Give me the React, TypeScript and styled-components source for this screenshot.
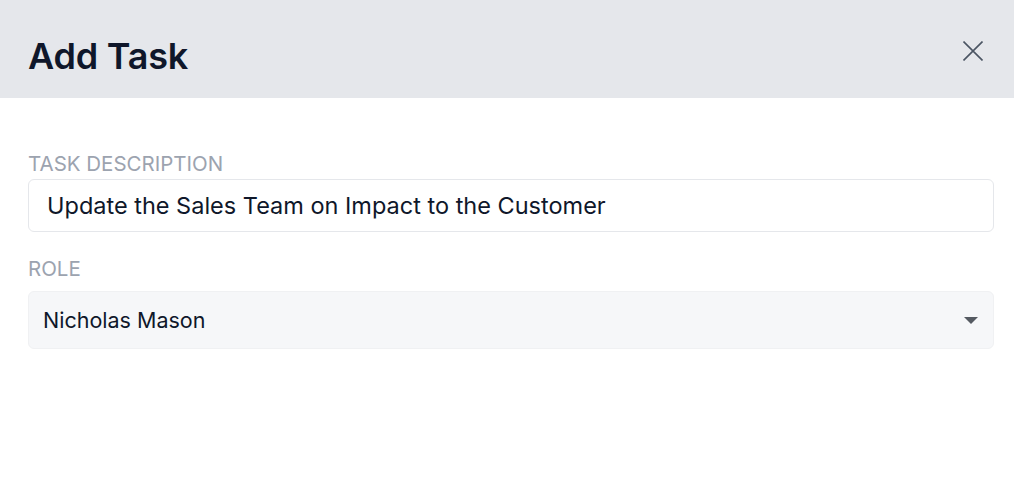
import styled, { createGlobalStyle } from "styled-components";

const GlobalStyle = createGlobalStyle`
  body {
    margin: 0;
    background: #ffffff;
    font-family: Inter, "Noto Sans", sans-serif;
  }
`;

const App = () => {
  return (
    <>
      <GlobalStyle />
      <Modal>
        <HeaderStyle>
          <TitleStyle>Add Task</TitleStyle>
          <CloseButton aria-label="Close">
            <svg width="20" height="20" viewBox="0 0 20 20" fill="none">
              <path d="M0.5 0.5L19.5 19.5M19.5 0.5L0.5 19.5" stroke="#4b5563" strokeWidth="1.6" />
            </svg>
          </CloseButton>
        </HeaderStyle>
        <BodyStyle>
          <Field $gap={3}>
            <LabelStyle>Task Description</LabelStyle>
            <TextInput defaultValue="Update the Sales Team on Impact to the Customer" />
          </Field>
          <Field $gap={10}>
            <LabelStyle>Role</LabelStyle>
            <SelectBox>
              <span>Nicholas Mason</span>
              <Caret />
            </SelectBox>
          </Field>
        </BodyStyle>
      </Modal>
    </>
  );
};

const Modal = styled.div`
  width: 1014px;
  height: 490px;
  background: #ffffff;
`;

const HeaderStyle = styled.header`
  height: 98px;
  background: #e5e7eb;
  display: flex;
  align-items: center;
  justify-content: space-between;
  padding: 0 31px 0 28px;
  box-sizing: border-box;
`;

const TitleStyle = styled.h1`
  margin: 13px 0 0;
  font-size: 36px;
  font-weight: 600;
  color: #0f172a;
  letter-spacing: -0.2px;
`;

const CloseButton = styled.button`
  background: none;
  border: 0;
  padding: 0;
  display: flex;
  cursor: pointer;
  margin-top: 4px;
`;

const BodyStyle = styled.div`
  padding: 54px 20px 0 28px;
  display: flex;
  flex-direction: column;
  gap: 25px;
`;

const Field = styled.div<{ $gap: number }>`
  display: flex;
  flex-direction: column;
  gap: ${({ $gap }) => $gap}px;
`;

const LabelStyle = styled.label`
  font-size: 20.5px;
  font-weight: 400;
  text-transform: uppercase;
  color: #9ca3af;
  line-height: 24px;
`;

const TextInput = styled.input`
  height: 53px;
  box-sizing: border-box;
  border: 1px solid #e5e7eb;
  border-radius: 6px;
  padding: 0 18px;
  font-family: Inter, "Noto Sans", sans-serif;
  font-size: 23.5px;
  color: #0f172a;
  outline: none;
`;

const SelectBox = styled.div`
  height: 58px;
  box-sizing: border-box;
  background: #f6f7f9;
  border: 1px solid #f0f1f3;
  border-radius: 6px;
  padding: 0 15px 0 14px;
  display: flex;
  align-items: center;
  justify-content: space-between;
  font-size: 21.5px;
  color: #0f172a;
`;

const Caret = styled.span`
  width: 0;
  height: 0;
  border-left: 7px solid transparent;
  border-right: 7px solid transparent;
  border-top: 7px solid #555a62;
`;

export default App;
